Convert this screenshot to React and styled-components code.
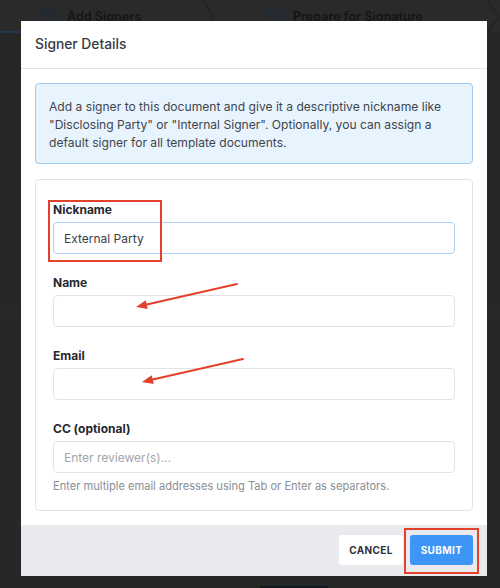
import React from "react";
import styled, { createGlobalStyle } from "styled-components";

const Global = createGlobalStyle`
  html, body { margin: 0; padding: 0; background: #262727; }
  body { font-family: Inter, "Noto Sans", Roboto, sans-serif; -webkit-font-smoothing: antialiased; }
  * { box-sizing: border-box; }
`;

const Stage = styled.div`
  position: relative;
  width: 500px;
  height: 588px;
  overflow: hidden;
  background: #262727;
`;

const TabBar = styled.div`
  height: 33px;
  background: #2a2a2a;
  border-bottom: 1px solid #232323;
  display: flex;
  align-items: center;
  position: relative;
`;

const ActiveLine = styled.div`
  position: absolute;
  left: 0;
  bottom: -1px;
  width: 24px;
  height: 2px;
  background: #1f3752;
`;

const Step = styled.div`
  display: flex;
  align-items: center;
  gap: 8px;
  width: ${(p) => p.$w}px;
  padding-left: ${(p) => p.$pl}px;
  padding-top: 1px;
  color: #151515;
  font-size: 12.6px;
  font-weight: 600;
  position: relative;
  height: 100%;
`;

const StepNum = styled.span`
  width: 20px;
  height: 20px;
  border-radius: 50%;
  border: 2px solid #1b2a3d;
  display: flex;
  align-items: center;
  justify-content: center;
  font-size: 10px;
  color: #1b2a3d;
`;

const Chevron = styled.svg`
  position: absolute;
  right: 0;
  top: 0;
`;

const Band = styled.div`
  margin-top: 271px;
  height: 14px;
  border-top: 1px solid #2c2c2c;
  border-bottom: 1px solid #2c2c2c;
  background: #282828;
`;

const BottomBlock = styled.div`
  position: absolute;
  left: 260px;
  bottom: 0;
  width: 68px;
  height: 2px;
  background: #10161d;
`;

const Modal = styled.div`
  position: absolute;
  left: 21px;
  top: 21px;
  width: 466px;
  height: 555px;
  background: #fff;
  display: flex;
  flex-direction: column;
`;

const Header = styled.div`
  height: 48px;
  border-bottom: 1px solid #e3e4e6;
  display: flex;
  align-items: center;
  padding: 0 14px 2px;
  font-size: 13.8px;
  font-weight: 500;
  color: #363b43;
`;

const Body = styled.div`
  padding: 14px 14px 14px;
  display: flex;
  flex-direction: column;
  gap: 15px;
`;

const Info = styled.div`
  background: #e8f4fd;
  border: 1px solid #9ccbf4;
  border-radius: 4px;
  padding: 14px 13px 12px;
  font-size: 12.1px;
  line-height: 18px;
  color: #40454d;
  height: 81px;
`;

const Card = styled.div`
  border: 1px solid #e2e3e5;
  border-radius: 4px;
  padding: 21px 17px 17px;
  display: flex;
  flex-direction: column;
  gap: 20px;
  height: 332px;
`;

const Field = styled.div`
  display: flex;
  flex-direction: column;
`;

const Label = styled.label`
  font-size: 12px;
  font-weight: 700;
  color: #25282d;
  line-height: 18px;
  margin-bottom: 3px;
`;

const Input = styled.div`
  height: 32px;
  border: 1px solid ${(p) => (p.$focus ? "#a9cff6" : "#e2e3e5")};
  border-radius: 4px;
  padding: 0 10px;
  display: flex;
  align-items: center;
  font-size: 12px;
  color: ${(p) => (p.$placeholder ? "#a2a5aa" : "#3a3e44")};
`;

const Help = styled.div`
  margin-top: 5px;
  font-size: 11.1px;
  color: #8a8e94;
  line-height: 16px;
`;

const Footer = styled.div`
  margin-top: auto;
  height: 51px;
  background: #e9eaed;
  display: flex;
  justify-content: flex-end;
  align-items: center;
  gap: 7px;
  padding: 0 14px 1px;
`;

const Button = styled.button`
  height: 30px;
  width: ${(p) => (p.$primary ? 63 : 64)}px;
  padding: 0;
  border: none;
  border-radius: 3px;
  font-family: inherit;
  font-size: 10px;
  font-weight: 700;
  letter-spacing: 0.4px;
  background: ${(p) => (p.$primary ? "#3d95f6" : "#fff")};
  color: ${(p) => (p.$primary ? "#fff" : "#2f333a")};
`;

const RedBox = styled.div`
  position: absolute;
  left: ${(p) => p.$x}px;
  top: ${(p) => p.$y}px;
  width: ${(p) => p.$w}px;
  height: ${(p) => p.$h}px;
  border: 2px solid #e3412b;
  pointer-events: none;
`;

const Arrows = styled.svg`
  position: absolute;
  left: 0;
  top: 0;
  pointer-events: none;
`;

function Arrow({ x1, y1, x2, y2 }) {
  const ang = Math.atan2(y2 - y1, x2 - x1);
  const L = 11;
  const W = 4.5;
  const bx = x2 - L * Math.cos(ang);
  const by = y2 - L * Math.sin(ang);
  const px = -Math.sin(ang) * W;
  const py = Math.cos(ang) * W;
  return (
    <g>
      <line x1={x1} y1={y1} x2={bx} y2={by} stroke="#e3412b" strokeWidth="2" strokeLinecap="round" />
      <polygon points={`${x2},${y2} ${bx + px},${by + py} ${bx - px},${by - py}`} fill="#e3412b" />
    </g>
  );
}

export default function App() {
  return (
    <>
      <Global />
      <Stage>
        <TabBar>
          <ActiveLine />
          <Step $w={215} $pl={39}>
            <StepNum>2</StepNum>
            Add Signers
            <Chevron width="14" height="33" viewBox="0 0 14 33">
              <path d="M1 0 L13 16.5 L1 33" stroke="#232323" strokeWidth="1.5" fill="none" />
            </Chevron>
          </Step>
          <Step $w={285} $pl={50}>
            <StepNum>3</StepNum>
            Prepare for Signature
            <Chevron width="14" height="33" viewBox="0 0 14 33">
              <path d="M1 0 L13 16.5 L1 33" stroke="#232323" strokeWidth="1.5" fill="none" />
            </Chevron>
          </Step>
        </TabBar>
        <Band />
        <BottomBlock />

        <Modal>
          <Header>Signer Details</Header>
          <Body>
            <Info>
              Add a signer to this document and give it a descriptive nickname like "Disclosing Party" or "Internal Signer". Optionally, you can assign a default signer for all template documents.
            </Info>
            <Card>
              <Field>
                <Label>Nickname</Label>
                <Input $focus>External Party</Input>
              </Field>
              <Field>
                <Label>Name</Label>
                <Input />
              </Field>
              <Field>
                <Label>Email</Label>
                <Input />
              </Field>
              <Field>
                <Label>CC (optional)</Label>
                <Input $placeholder>Enter reviewer(s)...</Input>
                <Help>Enter multiple email addresses using Tab or Enter as separators.</Help>
              </Field>
            </Card>
          </Body>
          <Footer>
            <Button>CANCEL</Button>
            <Button $primary>SUBMIT</Button>
          </Footer>
        </Modal>

        <RedBox $x={48} $y={200} $w={114} $h={62} />
        <RedBox $x={404} $y={528} $w={75} $h={46} />
        <Arrows width="500" height="588" viewBox="0 0 500 588">
          <Arrow x1={237} y1={284} x2={136} y2={307} />
          <Arrow x1={243} y1={359} x2={142} y2={382} />
        </Arrows>
      </Stage>
    </>
  );
}
